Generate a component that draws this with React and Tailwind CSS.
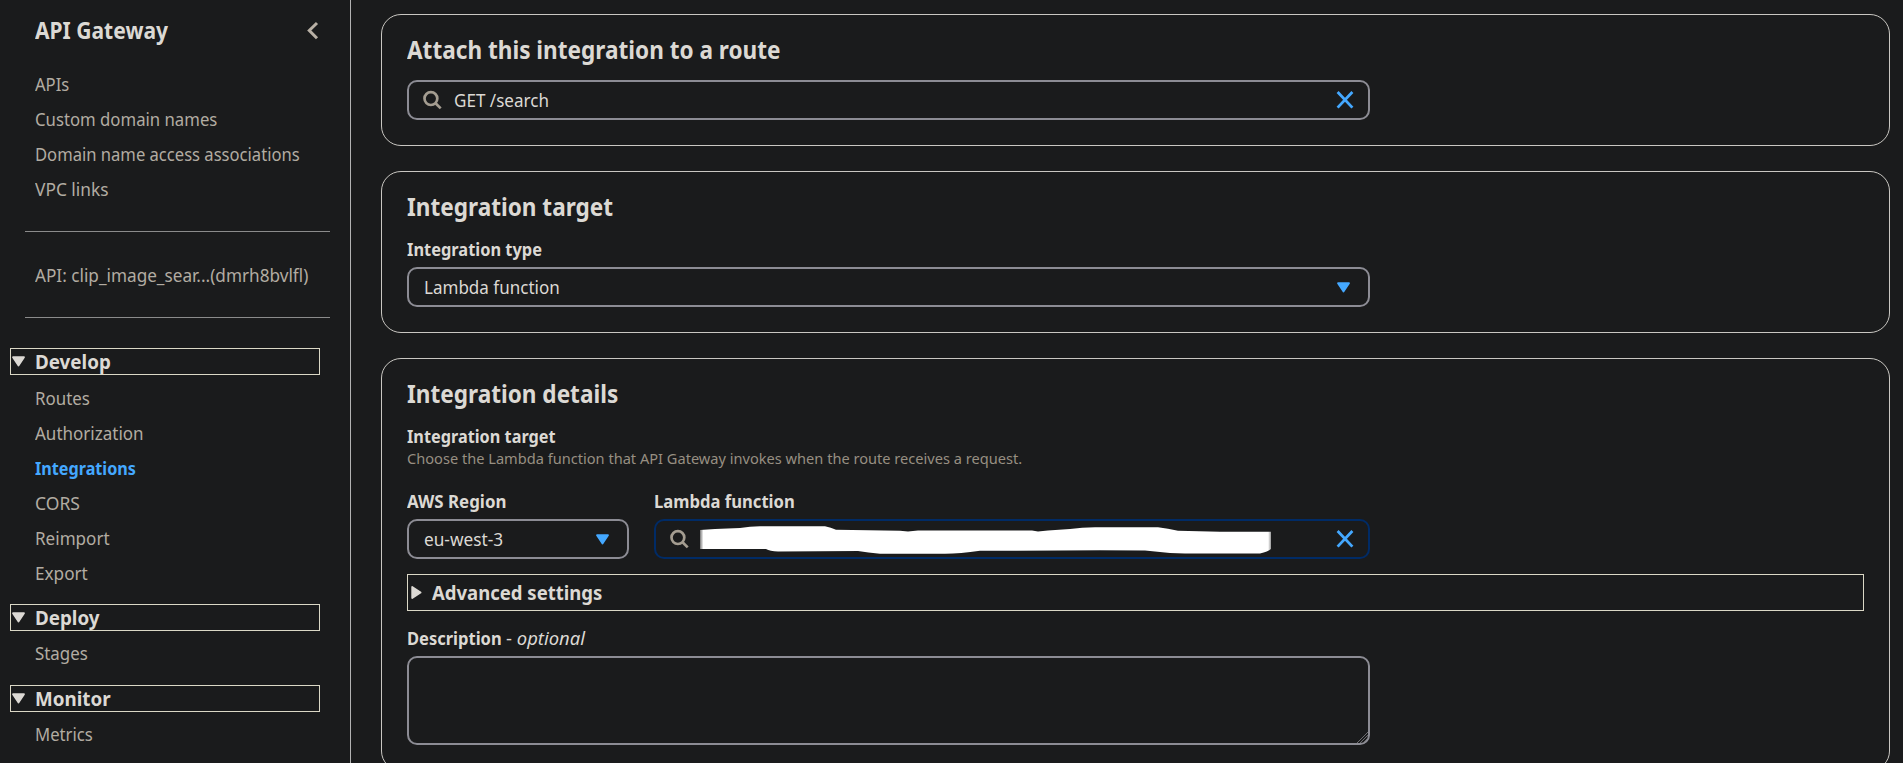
function Triangle({ dir = "down", className = "" }) {
  return (
    <svg width="13" height="11" viewBox="0 0 13 11" className={`shrink-0 overflow-visible ${className}`}>
      <path
        d="M1 1.2h11L6.5 9.6z"
        fill="currentColor"
        stroke="currentColor"
        strokeWidth="1.8"
        strokeLinejoin="round"
        transform={dir === "right" ? "rotate(-90 6.5 5.5)" : undefined}
      />
    </svg>
  );
}

function SearchIcon() {
  return (
    <svg width="20" height="20" viewBox="0 0 20 20" fill="none" stroke="#a49d91" strokeWidth="2.7" className="shrink-0">
      <circle cx="8.9" cy="8.6" r="6.4" />
      <path d="M13.3 13l5.4 5.4" />
    </svg>
  );
}

function CloseIcon() {
  return (
    <svg width="20" height="20" viewBox="0 0 20 20" fill="none" stroke="#44a8ff" strokeWidth="2.8" className="shrink-0">
      <path d="M2.6 2l14.8 15.6M17.4 2L2.6 17.6" />
    </svg>
  );
}

function NavLink({ children, active, className = "" }) {
  return (
    <a
      className={`block h-[35px] origin-left text-[17.5px] leading-[24px] whitespace-nowrap ${
        active ? "scale-x-[0.925] font-bold text-[#44a8ff]" : "text-[#b2aca2]"
      } ${className}`}
    >
      {children}
    </a>
  );
}

function SectionHeader({ children }) {
  return (
    <div className="ml-[10px] flex h-[27px] w-[310px] items-center gap-[10px] border border-[#dbd8c6] pl-px">
      <Triangle />
      <span className="origin-left scale-x-[0.94] text-[20px] leading-[25px] font-bold">{children}</span>
    </div>
  );
}

function Card({ title, className, children }) {
  return (
    <section className={`rounded-[20px] border border-[#c9c7c2] px-[25px] pt-[19px] ${className}`}>
      <h2 className="h-[31px] origin-left scale-x-[0.903] text-[25px] leading-[30px] font-bold whitespace-nowrap">{title}</h2>
      {children}
    </section>
  );
}

function Label({ children, className = "" }) {
  return (
    <div className={`h-[25px] text-[17.5px] leading-[24px] font-bold whitespace-nowrap ${className}`}>
      {children}
    </div>
  );
}

export default function App() {
  return (
    <div className="flex h-[763px] w-[1903px] overflow-hidden bg-[#1a1b1c] font-['Noto_Sans',sans-serif] text-[#dcd9d4]">
      <aside className="h-full w-[351px] shrink-0 border-r border-[#b3b3b3]">
        <div className="flex h-[46px] items-start justify-between pt-[16px] pr-[27px] pl-[35px]">
          <h1 className="origin-left scale-x-[0.935] text-[22.5px] leading-[29px] font-bold">API Gateway</h1>
          <svg width="20" height="20" viewBox="0 0 20 20" fill="none" stroke="#b8b0a5" strokeWidth="3" className="mt-[5px] shrink-0">
            <path d="M14 2L6.3 9.5l7.7 7.7" />
          </svg>
        </div>
        <nav className="mt-[26px] h-[159px] pl-[35px]">
          <NavLink className="scale-x-[0.95]">APIs</NavLink>
          <NavLink className="scale-x-[0.956]">Custom domain names</NavLink>
          <NavLink className="scale-x-[0.948]">Domain name access associations</NavLink>
          <NavLink className="scale-x-[0.99]">VPC links</NavLink>
        </nav>
        <div className="ml-[25px] h-px w-[305px] bg-[#8b8b8b]" />
        <div className="h-[85px] pt-[31px] pl-[35px]">
          <NavLink className="scale-x-[0.981]">API: clip_image_sear...(dmrh8bvlfl)</NavLink>
        </div>
        <div className="mb-[30px] ml-[25px] h-px w-[305px] bg-[#8b8b8b]" />
        <SectionHeader>Develop</SectionHeader>
        <nav className="h-[229px] pt-[11px] pl-[35px]">
          <NavLink className="scale-x-[0.965]">Routes</NavLink>
          <NavLink className="scale-x-[0.972]">Authorization</NavLink>
          <NavLink active>Integrations</NavLink>
          <NavLink>CORS</NavLink>
          <NavLink className="scale-x-[0.975]">Reimport</NavLink>
          <NavLink className="scale-x-[0.98]">Export</NavLink>
        </nav>
        <SectionHeader>Deploy</SectionHeader>
        <nav className="h-[54px] pt-[10px] pl-[35px]">
          <NavLink className="scale-x-[0.965]">Stages</NavLink>
        </nav>
        <SectionHeader>Monitor</SectionHeader>
        <nav className="pt-[10px] pl-[35px]">
          <NavLink className="scale-x-[0.955]">Metrics</NavLink>
        </nav>
      </aside>

      <main className="flex flex-1 flex-col gap-[25px] pt-[14px] pr-[13px] pl-[30px]">
        <Card title="Attach this integration to a route" className="h-[132px] shrink-0">
          <div className="mt-[15px] flex h-[40px] w-[963px] items-center rounded-[10px] border-2 border-[#8c8c94] px-[13px]">
            <SearchIcon />
            <span className="ml-[12px] flex-1 origin-left scale-x-[0.975] text-[17.5px] leading-[24px]">GET /search</span>
            <CloseIcon />
          </div>
        </Card>

        <Card title="Integration target" className="h-[162px] shrink-0">
          <Label className="mt-[15px] origin-left scale-x-[0.937]">Integration type</Label>
          <div className="mt-[5px] flex h-[40px] w-[963px] items-center justify-between rounded-[10px] border-2 border-[#8c8c94] pr-[18.5px] pl-[15px] text-[17.5px] leading-[24px]">
            <span className="origin-left scale-x-[0.973]">Lambda function</span>
            <Triangle className="text-[#44a8ff]" />
          </div>
        </Card>

        <Card title="Integration details" className="h-[413px] shrink-0">
          <Label className="mt-[15px] origin-left scale-x-[0.93]">Integration target</Label>
          <p className="-mt-px h-[21px] origin-left scale-x-[0.973] text-[15px] leading-[20px] text-[#978f82]">
            Choose the Lambda function that API Gateway invokes when the route receives a request.
          </p>
          <div className="mt-[20px] flex gap-[25px]">
            <div className="w-[222px]">
              <Label className="origin-left scale-x-[0.965]">AWS Region</Label>
              <div className="mt-[5px] flex h-[40px] items-center justify-between rounded-[10px] border-2 border-[#8c8c94] pr-[18.5px] pl-[15px] text-[17.5px] leading-[24px]">
                <span className="origin-left scale-x-[0.985]">eu-west-3</span>
                <Triangle className="text-[#44a8ff]" />
              </div>
            </div>
            <div className="w-[716px]">
              <Label className="origin-left scale-x-[0.95]">Lambda function</Label>
              <div className="mt-[5px] flex h-[40px] items-center rounded-[10px] border-2 border-[#002b66] px-[13px]">
                <SearchIcon />
                <svg width="572" height="30" viewBox="0 0 572 30" className="ml-[11px] shrink-0">
                  <defs>
                    <linearGradient id="strip">
                      <stop offset="0" stopColor="#777" />
                      <stop offset="0.006" stopColor="#fff" />
                      <stop offset="0.995" stopColor="#fff" />
                      <stop offset="1" stopColor="#999" />
                    </linearGradient>
                  </defs>
                  <path
                    d="M0 6L15 5 40 4Q50 2.2 60 2.2H125Q131 3.5 136 5.7L200 6.7 208 7.5 218 6.5 332 6.5 338 7.5 348 6.5 370 5Q382 3.2 395 3.2H458Q468 4.5 478 6.8L520 7.7H571V25Q568 27.5 560 29.5H485Q465 29 445 26.5L400 26.3 280 26.8Q260 29.8 245 29.8H180Q168 28.5 158 27L78 27.5Q70 27 66 25H0z"
                    fill="url(#strip)"
                  />
                </svg>
                <div className="flex-1" />
                <CloseIcon />
              </div>
            </div>
          </div>
          <div className="mt-[15px] flex h-[37px] w-[1457px] items-center gap-[9px] border border-[#dbd8c6] pl-[2px]">
            <Triangle dir="right" />
            <span className="origin-left scale-x-[0.926] text-[20px] leading-[25px] font-bold">Advanced settings</span>
          </div>
          <Label className="mt-[15px] flex">
            <span className="w-[98.5px] origin-left scale-x-[0.943]">Description</span>
            <span className="origin-left scale-x-[1.055] font-normal">
              - <i>optional</i>
            </span>
          </Label>
          <div className="mt-[5px] flex h-[89px] w-[963px] items-end justify-end rounded-[10px] border-2 border-[#8c8c94]">
            <svg width="12" height="12" viewBox="0 0 12 12" stroke="#77777c" strokeWidth="0.9">
              <path d="M1 12L12 1M4 12L12 4M7 12L12 7" />
            </svg>
          </div>
        </Card>
      </main>
    </div>
  );
}
